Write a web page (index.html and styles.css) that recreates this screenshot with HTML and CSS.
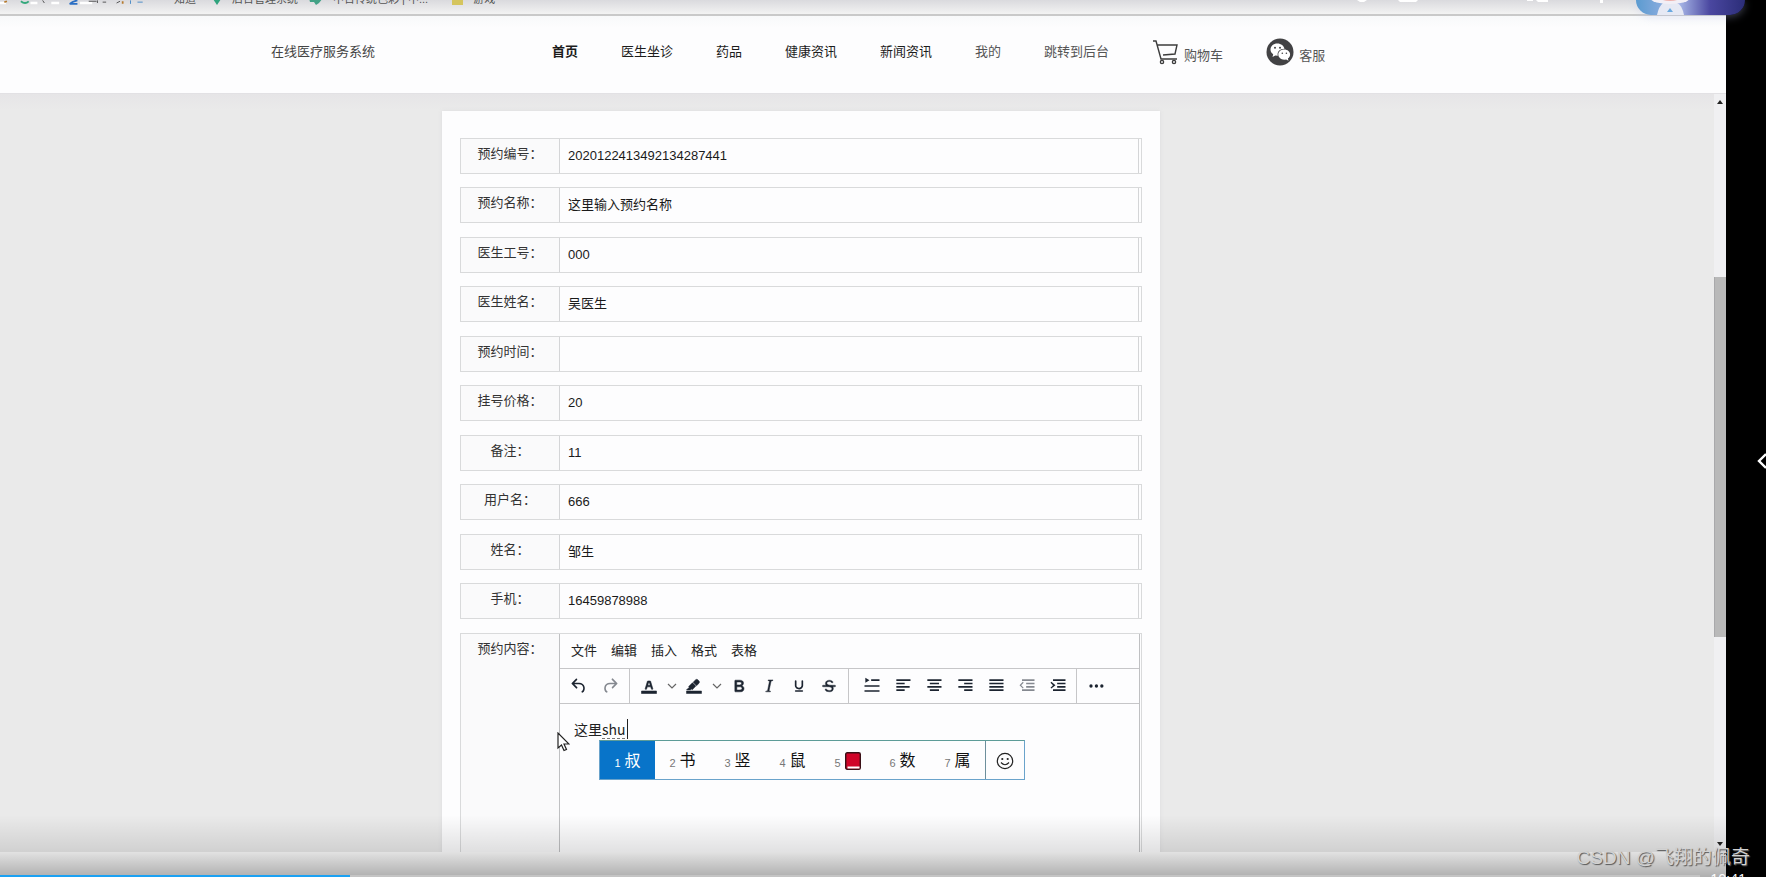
FILE: index.html
```html
<!DOCTYPE html>
<html lang="zh-CN">
<head>
<meta charset="utf-8">
<title>在线医疗服务系统</title>
<link rel="stylesheet" href="styles.css">
</head>
<body>
<div class="screen">
  <div class="bookmarks">
    <div class="favicons">
      <svg width="200" height="6" viewBox="0 0 200 6" aria-hidden="true">
        <path d="M0 3h7M35 3h8M59 3h9M92 3h14" stroke="#fff" stroke-width="3"/>
        <path d="M24 1q5 4 9 0" stroke="#34a87c" stroke-width="2" fill="none"/>
        <path d="M49 0l2 3M102 1h9M112 0v3M118 2h4M134 3l4-2" stroke="#444" stroke-width="1"/>
        <path d="M80 4q4-3 9-4M80 4h9" stroke="#2b6fc4" stroke-width="2" fill="none"/>
        <path d="M5 2l3-1M141 1v3" stroke="#b67a2e" stroke-width="2"/>
        <path d="M150 0v4M158 2h6" stroke="#3b82c4" stroke-width="1"/>
      </svg>
      <span class="mark">知道</span>
    </div>
    <span class="bookmark b-admin"><svg width="10" height="12" viewBox="0 0 10 12"><path d="M1 6h8l-4 6z" fill="#2fa37d"/></svg>后台管理系统</span>
    <span class="bookmark b-color"><svg width="14" height="12" viewBox="0 0 14 12"><path d="M0 5h14l-4 5-3 2-2-3H1z" fill="#43a286"/></svg>中台传统色彩 | 中...</span>
    <span class="bookmark"><svg width="11" height="12" viewBox="0 0 11 12"><path d="M0 2h11v10H0z" fill="#d5c55e"/></svg>游戏</span>
  </div>

  <header class="site-header">
    <div class="brand">在线医疗服务系统</div>
    <nav class="nav">
      <a class="active" href="#">首页</a>
      <a href="#">医生坐诊</a>
      <a href="#">药品</a>
      <a href="#">健康资讯</a>
      <a href="#">新闻资讯</a>
      <a class="soft" href="#">我的</a>
      <a class="soft" href="#">跳转到后台</a>
      <a class="soft with-icon" href="#"><svg width="27" height="27" viewBox="0 0 27 27" fill="none" stroke="#3c3c3c" stroke-width="1.4"><path d="M1 3h3l5 18h16M5 7h20l-2 9-12 1"/><circle cx="10" cy="24" r="1.6"/><circle cx="22" cy="24" r="1.6"/></svg><span>购物车</span></a>
      <a class="soft with-icon" href="#"><svg width="28" height="28" viewBox="0 0 28 28"><circle cx="14" cy="14" r="13.5" fill="#424244"/><path d="M11.500 5.500c-4.200 0-7 2.700-7 6 0 2 1 3.700 2.700 4.800L6.500 19l2.800-1.600 2.500.4c-1-4 2-7 6.700-7-.6-3-3.500-5.300-7-5.300z" fill="#fff"/><path d="M18.300 11.500c-3.600 0-6 2.300-6 5.100s2.400 5.100 6 5.100l1.900-.3 2.300 1.400-.6-2.200c1.400-1 2.200-2.400 2.200-4 0-2.800-2.500-5.100-5.800-5.100z" fill="#fff"/><g fill="#424244"><circle cx="9" cy="9.800" r="1"/><circle cx="14" cy="9.800" r="1"/><circle cx="16.300" cy="15.200" r=".8"/><circle cx="20.400" cy="15.200" r=".8"/></g></svg><span>客服</span></a>
    </nav>
  </header>

  <div class="viewport">
    <main class="page">
      <form class="card">
        <div class="row"><label for="f1">预约编号：</label><input id="f1" type="text" value="2020122413492134287441"></div>
        <div class="row"><label for="f2">预约名称：</label><input id="f2" type="text" value="这里输入预约名称"></div>
        <div class="row"><label for="f3">医生工号：</label><input id="f3" type="text" value="000"></div>
        <div class="row"><label for="f4">医生姓名：</label><input id="f4" type="text" value="吴医生"></div>
        <div class="row"><label for="f5">预约时间：</label><input id="f5" type="text" value=""></div>
        <div class="row"><label for="f6">挂号价格：</label><input id="f6" type="text" value="20"></div>
        <div class="row"><label for="f7">备注：</label><input id="f7" type="text" value="11"></div>
        <div class="row"><label for="f8">用户名：</label><input id="f8" type="text" value="666"></div>
        <div class="row"><label for="f9">姓名：</label><input id="f9" type="text" value="邹生"></div>
        <div class="row"><label for="f10">手机：</label><input id="f10" type="text" value="16459878988"></div>
        <div class="row editor-row">
          <label id="content-label">预约内容：</label>
          <div class="editor">
            <div class="menubar">
              <button type="button">文件</button><button type="button">编辑</button><button type="button">插入</button><button type="button">格式</button><button type="button">表格</button>
            </div>
            <div class="toolbar">
              <div class="group history">
                <button type="button" aria-label="撤销"><svg viewBox="0 0 24 24"><path d="M6.400 8H12c3.700 0 6.200 2 6.800 5.100.6 2.700-.4 5.600-2.300 6.800a1 1 0 0 1-1-1.800c1.100-.6 1.800-2.700 1.400-4.600-.5-2.100-2.100-3.500-4.900-3.500H6.400l3.300 3.300a1 1 0 1 1-1.400 1.400l-5-5a1 1 0 0 1 0-1.400l5-5a1 1 0 0 1 1.400 1.400L6.400 8z"/></svg></button>
                <button type="button" class="off" aria-label="重做"><svg viewBox="0 0 24 24"><path d="M17.600 10H12c-2.800 0-4.400 1.400-4.900 3.500-.4 2 .3 4 1.400 4.600a1 1 0 1 1-1 1.800c-2-1.200-2.900-4.100-2.300-6.800.6-3 3-5.100 6.800-5.100h5.600l-3.300-3.300a1 1 0 1 1 1.400-1.400l5 5a1 1 0 0 1 0 1.400l-5 5a1 1 0 0 1-1.400-1.400l3.300-3.300z"/></svg></button>
              </div>
              <div class="group format">
                <button type="button" aria-label="文字颜色"><svg viewBox="0 0 24 24"><path d="M3 18h18v3H3zM8.700 16h-.8a.5.5 0 0 1-.5-.6l2.700-9c.1-.3.3-.4.5-.4h2.800c.2 0 .4.1.5.4l2.700 9a.5.5 0 0 1-.5.6h-.8a.5.5 0 0 1-.4-.4l-.7-2.200c0-.3-.3-.4-.5-.4h-3.400c-.2 0-.4.1-.5.4l-.7 2.200c0 .3-.2.4-.4.4zm2.600-7.600-.6 2a.5.5 0 0 0 .5.6h1.600a.5.5 0 0 0 .5-.6l-.6-2c0-.3-.3-.4-.5-.4h-.4c-.2 0-.4.1-.5.4z" stroke="#1c2430" stroke-width=".7"/></svg></button>
                <button type="button" class="drop" aria-label="选择文字颜色"><svg viewBox="0 0 10 10"><path d="M1 3l4 4 4-4" fill="none" stroke="#666" stroke-width="1.200"/></svg></button>
                <button type="button" aria-label="背景颜色"><svg viewBox="0 0 24 24"><path d="M3 18h18v3H3zM7.700 16.700H3l3.300-3.300-.7-.8L10.200 8l4 4.100-4 4.200c-.2.2-.6.2-.8 0l-.6-.7-1.100 1.100zm5-7.500L11 7.400l3-2.900a2 2 0 0 1 2.600 0L18 6c.7.700.7 2 0 2.700l-2.900 2.900-1.800-1.800z" stroke="#1c2430" stroke-width=".6"/></svg></button>
                <button type="button" class="drop" aria-label="选择背景颜色"><svg viewBox="0 0 10 10"><path d="M1 3l4 4 4-4" fill="none" stroke="#666" stroke-width="1.200"/></svg></button>
                <button type="button" aria-label="粗体"><svg viewBox="0 0 24 24"><path d="M7.800 19c-.3 0-.5 0-.6-.2l-.2-.5V5.700c0-.2 0-.4.200-.5l.6-.2h5c1.500 0 2.700.3 3.500 1 .7.600 1.100 1.400 1.100 2.500a3 3 0 0 1-.6 1.900c-.4.600-1 1-1.600 1.200.4.100.9.300 1.300.6s.8.700 1 1.200c.4.400.5 1 .5 1.600 0 1.300-.4 2.300-1.300 3-.8.700-2.100 1-3.800 1H7.800zm5-8.300c.6 0 1.200-.1 1.600-.5.4-.3.600-.7.600-1.300 0-1.100-.8-1.700-2.300-1.700H9.300v3.500h3.400zm.5 6c.7 0 1.300-.1 1.700-.4.4-.4.600-.9.600-1.500s-.2-1-.7-1.400c-.4-.3-1-.4-2-.4H9.400v3.800h4z" stroke="#1c2430" stroke-width=".6"/></svg></button>
                <button type="button" aria-label="斜体"><svg viewBox="0 0 24 24"><path d="M16.700 4.700l-.1.900h-.3c-.6 0-1 0-1.400.3-.3.300-.4.600-.5 1.100l-2.100 9.800v.6c0 .5.400.8 1.400.8h.2l-.2.800H8l.2-.8h.2c1.100 0 1.800-.5 2-1.500l2-9.800.1-.5c0-.6-.4-.8-1.400-.8h-.3l.2-.9h5.800z" stroke="#1c2430" stroke-width=".5"/></svg></button>
                <button type="button" aria-label="下划线"><svg viewBox="0 0 24 24"><path d="M16 5c.6 0 1 .4 1 1v5.500a4 4 0 0 1-.4 1.800l-1 1.400a5.300 5.300 0 0 1-5.500 1 5 5 0 0 1-1.600-1c-.5-.4-.8-.9-1.100-1.400a4 4 0 0 1-.4-1.800V6c0-.6.400-1 1-1s1 .4 1 1v5.500c0 .3 0 .6.200 1l.6.7a3.300 3.300 0 0 0 2.200.8 3.400 3.400 0 0 0 2.200-.8c.3-.2.400-.5.600-.8l.2-.9V6c0-.6.400-1 1-1zM8 17h8c.6 0 1 .4 1 1s-.4 1-1 1H8a1 1 0 0 1 0-2z"/></svg></button>
                <button type="button" aria-label="删除线"><svg viewBox="0 0 24 24"><path d="M15.600 8.500c-.5-.7-1-1.100-1.300-1.300-.6-.4-1.300-.6-2-.6-2.700 0-2.800 1.700-2.800 2.100 0 1.600 1.800 2 3.200 2.300 4.400.9 4.600 2.800 4.600 3.900 0 1.400-.7 4.100-5 4.100A6.200 6.200 0 0 1 7 16.400l1.500-1.100c.4.600 1.600 2 3.700 2 1.600 0 2.500-.4 3-1.200.4-.8.300-2-.8-2.600-.7-.4-1.600-.7-2.900-1-1-.2-3.900-.8-3.900-3.600C7.600 6 10.300 5 12.400 5c2.900 0 4.200 1.600 4.700 2.400l-1.500 1.100zM5 11h14a1 1 0 0 1 0 2H5a1 1 0 0 1 0-2z" stroke="#1c2430" stroke-width=".4"/></svg></button>
              </div>
              <div class="group align">
                <button type="button" aria-label="首行缩进"><svg viewBox="0 0 24 24"><path d="M11 4h10v2H11zM3 11h18v2H3zM3 17h18v2H3zM4 2l5 3-5 3z"/></svg></button>
                <button type="button" aria-label="左对齐"><svg viewBox="0 0 24 24"><path d="M4 4h17v2H4zM4 8h10v2H4zM4 12h16v2H4zM4 16h10v2H4z"/></svg></button>
                <button type="button" aria-label="居中对齐"><svg viewBox="0 0 24 24"><path d="M4 4h17v2H4zM7 8h11v2H7zM4 12h17v2H4zM7 16h11v2H7z"/></svg></button>
                <button type="button" aria-label="右对齐"><svg viewBox="0 0 24 24"><path d="M4 4h17v2H4zM11 8h10v2H11zM4 12h17v2H4zM11 16h10v2H11z"/></svg></button>
                <button type="button" aria-label="两端对齐"><svg viewBox="0 0 24 24"><path d="M4 4h17v2H4zM4 8h17v2H4zM4 12h17v2H4zM4 16h17v2H4z"/></svg></button>
                <button type="button" class="off" aria-label="减少缩进"><svg viewBox="0 0 24 24"><path d="M6 4h15v2H6zM11 8h10v2H11zM11 12h10v2H11zM6 16h15v2H6zM7 7l1 1-3 3 3 3-1 1-4-4z"/></svg></button>
                <button type="button" aria-label="增加缩进"><svg viewBox="0 0 24 24"><path d="M6 4h15v2H6zM11 8h10v2H11zM11 12h10v2H11zM6 16h15v2H6zM4 7l5 4-5 4-1-1 3-3-3-3z"/></svg></button>
              </div>
              <div class="group more">
                <button type="button" aria-label="更多"><svg viewBox="0 0 24 24"><circle cx="6" cy="12" r="2"/><circle cx="12.500" cy="12" r="2"/><circle cx="19" cy="12" r="2"/></svg></button>
              </div>
            </div>
            <div class="editor-body">
              <div class="content" contenteditable="true" role="textbox" aria-labelledby="content-label">这里<span class="composing">shu</span></div>
              <svg class="pointer" width="13" height="20" viewBox="0 0 13 20"><path d="M1 1v15l3.500-3 2.500 5.500 2.500-1-2.500-5.500H12z" fill="#fff" stroke="#222" stroke-width="1.200"/></svg>
              <div class="ime">
                <button type="button" class="chosen"><small>1</small>叔</button>
                <button type="button"><small>2</small>书</button>
                <button type="button"><small>3</small>竖</button>
                <button type="button"><small>4</small>鼠</button>
                <button type="button" aria-label="书本"><small>5</small><svg width="16" height="18" viewBox="0 0 16 18"><rect x=".7" y=".7" width="14.600" height="16.600" rx="1.500" fill="#d00428" stroke="#3a1016" stroke-width="1.400"/><path d="M2.500 14.500h12v2h-12z" fill="#fff"/></svg></button>
                <button type="button"><small>6</small>数</button>
                <button type="button"><small>7</small>属</button>
                <button type="button" class="emoji" aria-label="表情"><svg width="18" height="18" viewBox="0 0 18 18"><circle cx="9" cy="9" r="7.700" fill="none" stroke="#222" stroke-width="1.200"/><circle cx="6.300" cy="7" r="1.100" fill="#222"/><circle cx="11.700" cy="7" r="1.100" fill="#222"/><path d="M5 10.500q4 4.500 8 0" fill="none" stroke="#222" stroke-width="1.200"/></svg></button>
              </div>
            </div>
          </div>
        </div>
      </form>
    </main>
    <div class="scrollbar" aria-hidden="true">
      <i class="up"></i><div class="track"><div class="thumb"></div></div><i class="down"></i>
    </div>
  </div>
  <div class="bottom-strip"></div>
  <div class="shade"></div>
  <div class="progress"><div class="played"></div></div>
</div>

<aside class="side"><svg width="9" height="16" viewBox="0 0 9 16"><path d="M9 1L2 8l7 7" fill="none" stroke="#fff" stroke-width="2.400"/></svg></aside>

<div class="mascot">
  <svg width="109" height="15" viewBox="0 0 109 15" aria-hidden="true"><path d="M21 15q2-9 6-12h14q5 2 7 12z" fill="#e6e9f4"/><ellipse cx="34" cy="-1" rx="19" ry="5" fill="#f2eff6"/><ellipse cx="34" cy="-2" rx="10" ry="3" fill="#eeb0ac"/><path d="M31 12l3-4 3 4z" fill="#6aa9e0"/></svg>
</div>
<svg class="player-marks" width="250" height="3" viewBox="0 0 250 3" aria-hidden="true"><path d="M2 0h10l-3 2H5zM43 0h20l-2 2H45zM172 0h6v1h-6zM181 0h12v2h-10zM245 0h3v3h-3z" fill="#fff"/></svg>
<div class="clock">10:41</div>
<div class="watermark">CSDN @飞翔的佩奇</div>
</body>
</html>
```
FILE: styles.css
```css
* { box-sizing: border-box; }

body {
  margin: 0;
  height: 100vh;
  display: flex;
  overflow: hidden;
  position: relative;
  background: #000;
  color: #222;
  font: 13px/20px "Liberation Sans", "Noto Sans CJK SC", sans-serif;
}

button, input {
  font: inherit;
  color: inherit;
  background: none;
  border: 0;
  margin: 0;
  padding: 0;
}

a { color: inherit; text-decoration: none; }

.screen {
  flex: 1;
  min-width: 0;
  display: flex;
  flex-direction: column;
  position: relative;
}

.side {
  flex: 0 0 40px;
  display: flex;
  align-items: center;
  justify-content: flex-end;
  padding-top: 44px;
}

/* browser bookmarks */
.bookmarks {
  flex: 0 0 16px;
  display: flex;
  align-items: flex-start;
  overflow: hidden;
  background: linear-gradient(#dadade, #f3f3f3);
  border-bottom: 2px solid #c9c9c9;
  color: #555;
  font-size: 11px;
  line-height: 12px;
}

.favicons {
  flex: 0 0 212px;
  display: flex;
}

.favicons svg { flex: 0 0 174px; }

.mark, .bookmark { margin-top: -7px; }

.bookmark {
  display: flex;
  gap: 10px;
  margin-right: 20px;
  white-space: nowrap;
}

.b-admin { margin-right: 11px; }
.b-color { margin-right: 24px; }

/* site header */
.site-header {
  flex: 0 0 78px;
  display: grid;
  grid-template-columns: 281fr 1174fr;
  padding: 0 0 6px 271px;
  align-items: center;
  background: linear-gradient(#f8f9fa, #fdfdfe 12px);
  border-bottom: 1px solid #e2e1e4;
  color: #444;
  white-space: nowrap;
}

.nav {
  display: flex;
  align-items: center;
  gap: 43px;
  color: #1c1c1c;
}

.nav .active { font-weight: 700; }
.nav .soft { color: #555; }

.with-icon {
  display: flex;
  align-items: center;
  gap: 5px;
}

.with-icon span { padding-top: 8px; }

/* scrolled page */
.viewport {
  flex: 1;
  min-height: 0;
  display: flex;
  background: linear-gradient(#e6e5e7, #eaeaea 16px);
}

.page {
  flex: 1;
  min-width: 0;
  overflow: hidden;
  display: grid;
  grid-template-columns: 442fr 718fr 554fr;
  padding-top: 17px;
}

.card {
  grid-column: 2;
  padding: 27px 18px 0;
  background: #fdfdfe;
  box-shadow: 0 0 4px #dcdcde;
}

.row {
  display: flex;
  min-height: 36px;
  margin-bottom: 13px;
  border: 1px solid #d9dadb;
  background: #fdfdfe;
}

.row:nth-child(even) { margin-bottom: 14px; }

.row label {
  flex: 0 0 98px;
  padding: 5px 10px 0;
  text-align: center;
  background: #fafafb;
  color: #333;
  white-space: nowrap;
}

.row input {
  flex: 1;
  min-width: 0;
  margin-right: 2px;
  padding: 0 8px;
  border: solid #d4d5d7;
  border-width: 0 1px;
  color: #1a1a1a;
}

/* rich text editor */
.editor {
  flex: 1;
  min-width: 0;
  margin-right: 1px;
  border: solid #bfc0c2;
  border-width: 0 1px;
}

.menubar {
  display: flex;
  gap: 14px;
  height: 35px;
  padding-left: 11px;
  border-bottom: 1px solid #c6c6c8;
}

.toolbar {
  display: flex;
  height: 35px;
  border-bottom: 1px solid #c6c6c8;
}

.group {
  display: flex;
  align-items: center;
  border-right: 1px solid #c6c6c8;
}

.group button {
  flex: 0 0 31px;
  display: flex;
  align-items: center;
  justify-content: center;
  height: 28px;
}

.group svg {
  width: 20px;
  height: 20px;
  fill: #1c2430;
}

.group .off svg { fill: #858990; }
.format button { flex-basis: 30px; }
.group .drop { flex-basis: 15px; }
.group .drop svg { width: 10px; height: 10px; }
.history { padding: 0 4px 0 3px; }
.format { padding: 0 4px; }
.align { padding: 0 3px 0 7px; }
.more { padding-left: 3px; border-right: 0; }

.editor-body {
  position: relative;
  height: 260px;
  padding: 15px 14px;
}

.content {
  width: fit-content;
  padding-right: 1px;
  border-right: 1px solid #222;
  font-family: "Noto Sans CJK SC", sans-serif;
  font-size: 14px;
  outline: 0;
}

.composing {
  text-decoration: underline dashed 1px #777;
  text-underline-offset: 3px;
}

.pointer {
  position: absolute;
  left: -3px;
  top: 28px;
}

.ime {
  position: absolute;
  left: 39px;
  top: 36px;
  display: flex;
  width: 426px;
  height: 40px;
  background: #fdfdfe;
  border: 1px solid #6aa3cb;
  border-top-color: #5d9c98;
}

.ime button {
  flex: 1;
  display: flex;
  align-items: center;
  justify-content: center;
  gap: 4px;
  padding-top: 2px;
  font-size: 16px;
  color: #111;
}

.ime small {
  padding-top: 4px;
  font-size: 11px;
  color: #777;
}

.ime .chosen { background: #0874c9; color: #fff; }
.ime .chosen small { color: #fff; }

.ime .emoji {
  flex: 0 0 39px;
  border-left: 1px solid #6d8f9c;
}

/* page scrollbar */
.scrollbar {
  flex: 0 0 12px;
  display: flex;
  flex-direction: column;
  align-items: center;
  padding: 6px 0;
  background: #f0f0f2;
}

.scrollbar i {
  border: 3px solid transparent;
}

.scrollbar .up { border-top: 0; border-bottom: 4px solid #222; }
.scrollbar .down { border-bottom: 0; border-top: 4px solid #222; }

.track {
  flex: 1;
  align-self: stretch;
  display: flex;
  flex-direction: column;
}

.track::before { content: ""; flex: 173; }
.track::after { content: ""; flex: 205; }

.thumb {
  flex: 360;
  background: #b9b9b9;
  border-left: 1px solid #a9a9ab;
}

/* video player overlays */
.bottom-strip {
  flex: 0 0 25px;
  background: #fdfdfd;
}

.shade {
  position: absolute;
  inset: auto 0 0;
  height: 62px;
  background: linear-gradient(rgba(0,0,0,0), rgba(0,0,0,.11) 60%, rgba(0,0,0,.31));
  pointer-events: none;
}

.progress {
  position: absolute;
  inset: auto 26px 0 0;
  height: 2px;
  background: #c4c4c4;
}

.played {
  width: 350px;
  height: 2px;
  background: #1ba1f2;
}

.mascot {
  position: absolute;
  top: 0;
  right: 21px;
  width: 109px;
  height: 15px;
  overflow: hidden;
  border-radius: 0 0 22px 22px;
  background: linear-gradient(90deg, #5b9bd0, #a6b5e6 40%, #4a47a0 68%, #2b2d78);
  box-shadow: 0 2px 8px #b9c4ea55;
}

.player-marks {
  position: absolute;
  top: 0;
  right: 161px;
}

.clock {
  position: absolute;
  right: 20px;
  bottom: -10px;
  font: 14px/16px "Open Sans", sans-serif;
  color: #fff;
}

.watermark {
  position: absolute;
  right: 16px;
  bottom: 7px;
  font-size: 19px;
  line-height: 24px;
  color: #d2d2d2;
  text-shadow: 1px 1px 1px #555;
  white-space: nowrap;
}
```
